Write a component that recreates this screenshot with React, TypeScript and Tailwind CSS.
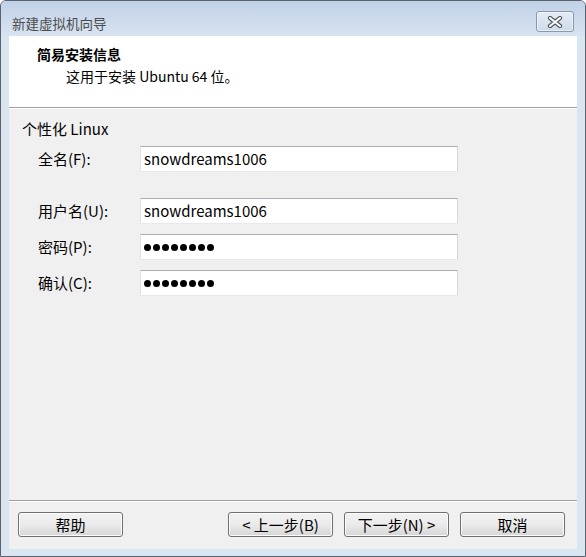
import React from "react";

function WinButton({ label, className = "" }: { label: string; className?: string }) {
  return (
    <button
      className={`h-[25px] w-[105px] rounded-[3px] border border-[#707070] bg-gradient-to-b from-[#f2f2f2] via-[#ebebeb] to-[#d6d6d6] text-[15px] leading-none text-black shadow-[inset_0_0_0_1px_#fcfcfc] ${className}`}
    >
      {label}
    </button>
  );
}

function TextBox({ children }: { children: React.ReactNode }) {
  return (
    <div className="flex h-[26px] w-[318px] items-center border border-t-[#abadb3] border-l-[#e2e3ea] border-r-[#d5d8de] border-b-[#e3e9ef] bg-white pl-[3px] text-[15px] text-black">
      {children}
    </div>
  );
}

function Dots() {
  return (
    <div className="flex gap-[2px]">
      {Array.from({ length: 8 }).map((_, i) => (
        <span key={i} className="h-[7px] w-[7px] rounded-full bg-black" />
      ))}
    </div>
  );
}

function FormRow({ label, children, className = "" }: { label: string; children: React.ReactNode; className?: string }) {
  return (
    <div className={`flex items-center ${className}`}>
      <div className="w-[102px] text-[15px] leading-[20px] text-black">{label}</div>
      <TextBox>{children}</TextBox>
    </div>
  );
}

export default function App() {
  return (
    <div className="h-[557px] w-[586px] font-['Noto_Sans_CJK_SC','Liberation_Sans',sans-serif]">
      <div className="flex h-full w-full flex-col rounded-t-[6px] border border-[#59626d] bg-[#dae5f2]">
        {/* Title bar */}
        <div className="flex h-[35px] items-start justify-between rounded-t-[5px] bg-gradient-to-b from-[#c0d1e6] to-[#d8e3f1] pr-[11px]">
          <div className="pl-[11px] pt-[12px] text-[13.5px] leading-[20px] text-[#4c4c4c]">新建虚拟机向导</div>
          <div className="mt-[10px] flex h-[21px] w-[38px] items-center justify-center rounded-[3px] border border-[#8a98ab] bg-gradient-to-b from-[#e4ecf6] to-[#cfdbea] shadow-[inset_0_0_0_1px_rgba(255,255,255,0.5)]">
            <svg width="16" height="12" viewBox="0 0 16 12">
              <path d="M3 2 L13 10 M13 2 L3 10" stroke="#4a4f57" strokeWidth="4.2" strokeLinecap="round" />
              <path d="M3 2 L13 10 M13 2 L3 10" stroke="#ffffff" strokeWidth="2.2" strokeLinecap="round" />
            </svg>
          </div>
        </div>

        {/* Client area */}
        <div className="mx-[8px] mb-[7px] flex flex-1 flex-col bg-[#f0f0f0]">
          {/* Header */}
          <div className="h-[71px] bg-white pt-[8px]">
            <div className="pl-[28px] text-[14px] font-bold leading-[20px] text-black">简易安装信息</div>
            <div className="mt-[2px] pl-[57px] text-[14px] leading-[20px] text-black">这用于安装 Ubuntu 64 位。</div>
          </div>
          <div className="border-t border-b border-t-[#a0a0a0] border-b-white" />

          {/* Body */}
          <div className="flex-1 pl-[13px] pt-[10px]">
            <div className="text-[15px] leading-[20px] text-black">个性化 Linux</div>
            <div className="mt-[7px] flex flex-col pl-[16px]">
              <FormRow label="全名(F):">snowdreams1006</FormRow>
              <FormRow label="用户名(U):" className="mt-[26px]">snowdreams1006</FormRow>
              <FormRow label="密码(P):" className="mt-[10px]">
                <Dots />
              </FormRow>
              <FormRow label="确认(C):" className="mt-[10px]">
                <Dots />
              </FormRow>
            </div>
          </div>

          {/* Footer */}
          <div className="border-t border-b border-t-[#a0a0a0] border-b-white" />
          <div className="flex items-center justify-between pb-[12px] pl-[9px] pr-[12px] pt-[10px]">
            <WinButton label="帮助" />
            <div className="flex gap-[11px]">
              <WinButton label="< 上一步(B)" />
              <WinButton label="下一步(N) >" />
              <WinButton label="取消" />
            </div>
          </div>
        </div>
      </div>
    </div>
  );
}
